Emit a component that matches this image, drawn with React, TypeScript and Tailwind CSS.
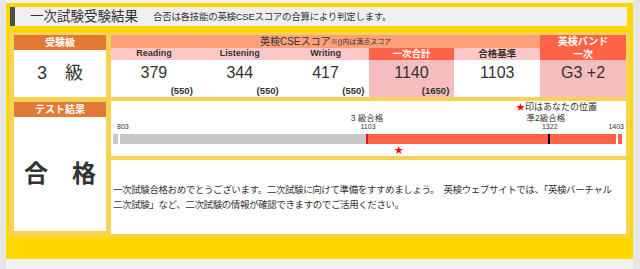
import React from 'react';

// CSE score table columns
const skills = [
  { label: 'Reading', score: 379, max: 550 },
  { label: 'Listening', score: 344, max: 550 },
  { label: 'Writing', score: 417, max: 550 },
];

const total = { score: 1140, max: 1650 };
const passLine = 1103;

// chart scale: 803 .. 1403 mapped onto the bar
const scaleMin = 803;
const scaleMax = 1403;
const pos = (v: number) => 7 + ((v - scaleMin) * 498) / (scaleMax - scaleMin);

const ScoreChart = () => (
  <div className="relative h-[55px] bg-white text-[#333]">
    <div className="absolute right-[29px] top-[1px] text-[9px] leading-[11px]">
      <span className="text-[#ff0000]">★</span>印はあなたの位置
    </div>

    <div
      className="absolute top-[12px] -translate-x-1/2 whitespace-nowrap text-[8.5px] leading-[10px]"
      style={{ left: pos(1103) }}
    >
      3 級合格
    </div>
    <div
      className="absolute top-[12px] -translate-x-1/2 whitespace-nowrap text-[8.5px] leading-[10px]"
      style={{ left: pos(1322) - 3 }}
    >
      準2級合格
    </div>

    <div className="absolute left-[6px] top-[22px] text-[7px] leading-[8px]">803</div>
    <div
      className="absolute top-[22px] -translate-x-1/2 text-[7px] leading-[8px]"
      style={{ left: pos(1103) + 1 }}
    >
      1103
    </div>
    <div
      className="absolute top-[22px] -translate-x-1/2 text-[7px] leading-[8px]"
      style={{ left: pos(1322) + 1 }}
    >
      1322
    </div>
    <div className="absolute right-[2px] top-[22px] text-[7px] leading-[8px]">1403</div>

    <div className="absolute left-[2px] top-[33px] flex h-[10px] w-[509px]">
      <div className="bg-[#c8c8c8]" style={{ width: pos(passLine) - 2 }} />
      <div className="flex-1 bg-[#ff6347]" />
    </div>
    <div className="absolute top-[33px] h-[10px] w-[2px] bg-white" style={{ left: pos(803) }} />
    <div className="absolute top-[33px] h-[10px] w-[2px] bg-[#e3140f]" style={{ left: pos(1103) - 1 }} />
    <div className="absolute top-[33px] h-[10px] w-[2px] bg-black" style={{ left: pos(1322) - 1 }} />
    <div className="absolute top-[33px] h-[10px] w-[2px] bg-white" style={{ left: pos(1403) }} />

    <div
      className="absolute top-[44px] -translate-x-1/2 text-[9px] leading-[11px] text-[#ff0000]"
      style={{ left: pos(total.score) + 1 }}
    >
      ★
    </div>
  </div>
);

export default function App() {
  return (
    <div className="flex h-[269px] w-[640px] bg-[#e6e6e6] font-['Liberation_Sans','Noto_Sans_CJK_JP',sans-serif] text-[#333]">
      <div className="ml-[6px] w-[627px] bg-[#f2f2f2] pt-[3px]">
        <div className="flex h-[256px] flex-col bg-[#ffd700]">
          {/* title bar */}
          <div className="ml-[4px] mr-[6px] mt-[4px] flex h-[19px] items-center bg-[#efefef]">
            <div className="h-full w-[5px] bg-[#4d4d4d]" />
            <h1 className="ml-[15px] text-[13.5px] leading-none">一次試験受験結果</h1>
            <p className="ml-[15px] text-[9.5px] leading-none tracking-[-0.3px]">
              合否は各技能の英検CSEスコアの合算により判定します。
            </p>
          </div>

          <div className="mx-[3px] mt-[6px] flex h-[205px] gap-[5px] bg-[#f8d253] pb-[3px] pl-[5px] pr-[4px] pt-[3px]">
            {/* left column */}
            <div className="flex w-[92px] shrink-0 flex-col gap-[5px]">
              <div className="flex h-[62px] flex-col">
                <div className="flex h-[15px] items-center justify-center bg-[#e27a36] text-[10px] font-bold text-white">
                  受験級
                </div>
                <div className="flex flex-1 items-center justify-center bg-white text-[18px]">3　級</div>
              </div>
              <div className="mb-[3px] flex flex-1 flex-col">
                <div className="flex h-[15px] items-center justify-center bg-[#e27a36] text-[10px] font-bold text-white">
                  テスト結果
                </div>
                <div className="flex flex-1 items-center justify-center bg-white text-[24px] font-bold">合　格</div>
              </div>
            </div>

            {/* right column */}
            <div className="flex min-w-0 flex-1 flex-col gap-[4px]">
              <div className="grid h-[62px] grid-cols-6 grid-rows-[13px_12px_37px]">
                <div className="col-span-5 flex items-center justify-center bg-[#ffa07a] text-[10px] leading-none">
                  英検CSEスコア<span className="text-[7px]">※()内は満点スコア</span>
                </div>
                <div className="row-span-2 flex flex-col items-center justify-center bg-[#ff6347] text-[10px] font-bold leading-[13px] text-white">
                  <span>英検バンド</span>
                  <span>一次</span>
                </div>

                {skills.map((s) => (
                  <div key={s.label} className="flex items-center justify-center bg-[#ffc8c8] text-[9px] font-bold">
                    {s.label}
                  </div>
                ))}
                <div className="flex items-center justify-center bg-[#ff6347] text-[9.5px] font-bold text-white">一次合計</div>
                <div className="flex items-center justify-center bg-[#ffc8c8] text-[9.5px] font-bold">合格基準</div>

                {skills.map((s) => (
                  <div key={s.label} className="bg-white">
                    <div className="pt-[3px] text-center text-[16px] leading-[20px]">{s.score}</div>
                    <div className="mt-[2px] pr-[4px] text-right text-[9.5px] font-bold leading-[12px]">({s.max})</div>
                  </div>
                ))}
                <div className="bg-[#f5bdbd]">
                  <div className="pt-[3px] text-center text-[16px] leading-[20px]">{total.score}</div>
                  <div className="mt-[2px] pr-[5px] text-right text-[9.5px] font-bold leading-[12px]">({total.max})</div>
                </div>
                <div className="bg-white">
                  <div className="pt-[3px] text-center text-[16px] leading-[20px]">{passLine}</div>
                </div>
                <div className="bg-[#f5bdbd]">
                  <div className="pt-[3px] text-center text-[16px] leading-[20px]">G3 +2</div>
                </div>
              </div>

              <ScoreChart />

              <div className="flex flex-1 items-center bg-white px-[2px] text-[9.5px] leading-[15px] tracking-[-0.4px]">
                <p className="whitespace-nowrap">
                  一次試験合格おめでとうございます。二次試験に向けて準備をすすめましょう。　英検ウェブサイトでは、「英検バーチャル
                  <br />
                  二次試験」など、二次試験の情報が確認できますのでご活用ください。
                </p>
              </div>
            </div>
          </div>
        </div>
      </div>
    </div>
  );
}
